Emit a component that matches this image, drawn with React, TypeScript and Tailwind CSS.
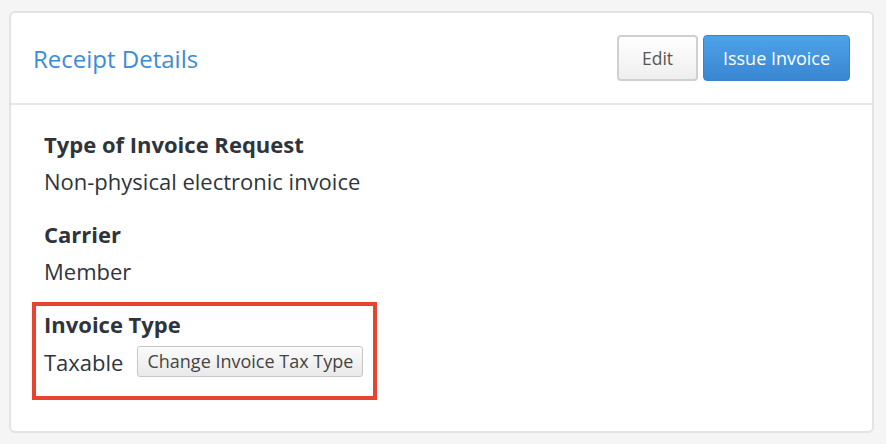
export default function App() {
  return (
    <div className="h-[444px] w-[886px] bg-[#f5f5f5] pt-[11px] pl-[9px] font-['Open_Sans',sans-serif]">
      <div className="h-[422px] w-[865px] rounded-[6px] border-2 border-[#e3e3e3] bg-white">
        {/* header */}
        <div className="flex h-[92px] items-center justify-between border-b-2 border-[#e6e6e6] pl-[22px] pr-[22px]">
          <h2 className="pt-[2px] text-[24px] text-[#3c8bd9]">Receipt Details</h2>
          <div className="flex gap-[5px]">
            <button className="h-[46px] w-[81px] rounded-[4px] border-2 border-[#d0d0d0] bg-gradient-to-b from-white to-[#eeeeee] text-[17.5px] text-[#555]">
              Edit
            </button>
            <button className="h-[46px] w-[147px] rounded-[4px] border border-[#3a84cc] bg-gradient-to-b from-[#4da3ea] to-[#3986d0] text-[18px] text-white">
              Issue Invoice
            </button>
          </div>
        </div>

        {/* body */}
        <div className="pt-[25px] pl-[33px] text-[22px] leading-[28px] text-[#2f343c]">
          <div className="font-bold">Type of Invoice Request</div>
          <div className="mt-[9px]">Non-physical electronic invoice</div>
          <div className="mt-[25px] font-bold">Carrier</div>
          <div className="mt-[9px]">Member</div>

          <div className="-ml-[12px] mt-[17px] h-[98px] w-[345px] border-4 border-[#e8432e] pt-[4px] pl-[8px]">
            <div className="font-bold">Invoice Type</div>
            <div className="mt-[8px] flex items-center gap-[14px]">
              <span>Taxable</span>
              <button className="h-[31px] rounded-[3px] border border-[#c6c6c6] bg-gradient-to-b from-[#fbfbfb] to-[#e9e9e9] px-[9px] text-[18px] leading-[29px] text-[#444]">
                Change Invoice Tax Type
              </button>
            </div>
          </div>
        </div>
      </div>
    </div>
  );
}
